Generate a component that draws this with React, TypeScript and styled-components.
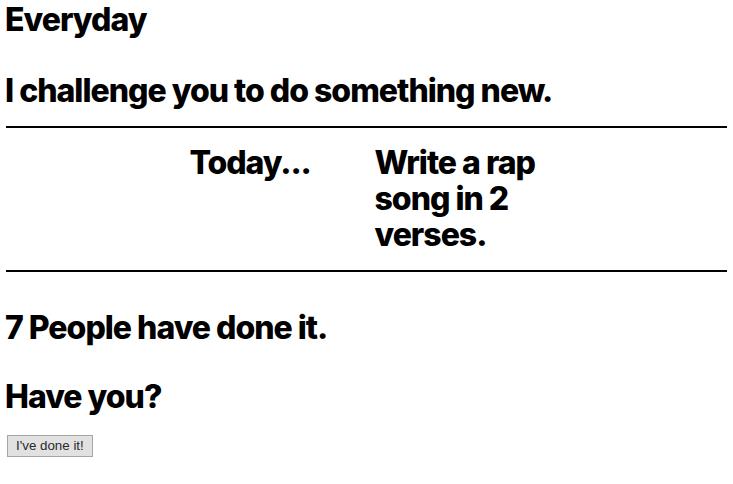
import React from 'react';
import styled, { createGlobalStyle } from 'styled-components';

const GlobalStyle = createGlobalStyle`
  html, body {
    margin: 0;
    padding: 0;
    background: #ffffff;
  }
  body {
    font-family: Inter, "Liberation Sans", sans-serif;
    color: #000000;
  }
`;

const Page = styled.main`
  display: flex;
  flex-direction: column;
  align-items: flex-start;
  padding: 2px 6px 0;
`;

// big bold lines share the same type settings
const Heading = styled.h1<{ $top?: number }>`
  margin: ${(props) => props.$top ?? 0}px 0 0 -1px;
  font-family: Inter, sans-serif;
  font-size: 32px;
  font-weight: 800;
  line-height: 36px;
  letter-spacing: -1px;
`;

const Challenge = styled.section`
  align-self: stretch;
  display: flex;
  justify-content: center;
  margin-top: 17px;
  padding: 17px 3px 17px 0;
  border-top: 2px solid #000;
  border-bottom: 2px solid #000;
`;

const Label = styled.h2`
  width: 185px;
  margin: 0;
  font-size: 32px;
  font-weight: 800;
  line-height: 36px;
  letter-spacing: -1.1px;
`;

const Task = styled.p`
  width: 166px;
  margin: 0;
  font-size: 32px;
  font-weight: 800;
  line-height: 36px;
  letter-spacing: -1px;
`;

const DoneButton = styled.button`
  margin-top: 20px;
  margin-left: 1px;
  padding: 2px 8px;
  border: 1px solid #a6a6a6;
  border-radius: 0;
  background: #e1e1e1;
  color: #2a2a2a;
  font-family: "Liberation Sans", Arial, sans-serif;
  font-size: 13.333px;
  line-height: 16px;
  cursor: pointer;
`;

export default function App() {
  return (
    <>
      <GlobalStyle />
      <Page>
        <Heading>Everyday</Heading>
        <Heading $top={35}>I challenge you to do something new.</Heading>
        <Challenge>
          <Label>Today...</Label>
          <Task>Write a rap song in 2 verses.</Task>
        </Challenge>
        <Heading $top={38}>7 People have done it.</Heading>
        <Heading $top={33}>Have you?</Heading>
        <DoneButton type="button">I've done it!</DoneButton>
      </Page>
    </>
  );
}
